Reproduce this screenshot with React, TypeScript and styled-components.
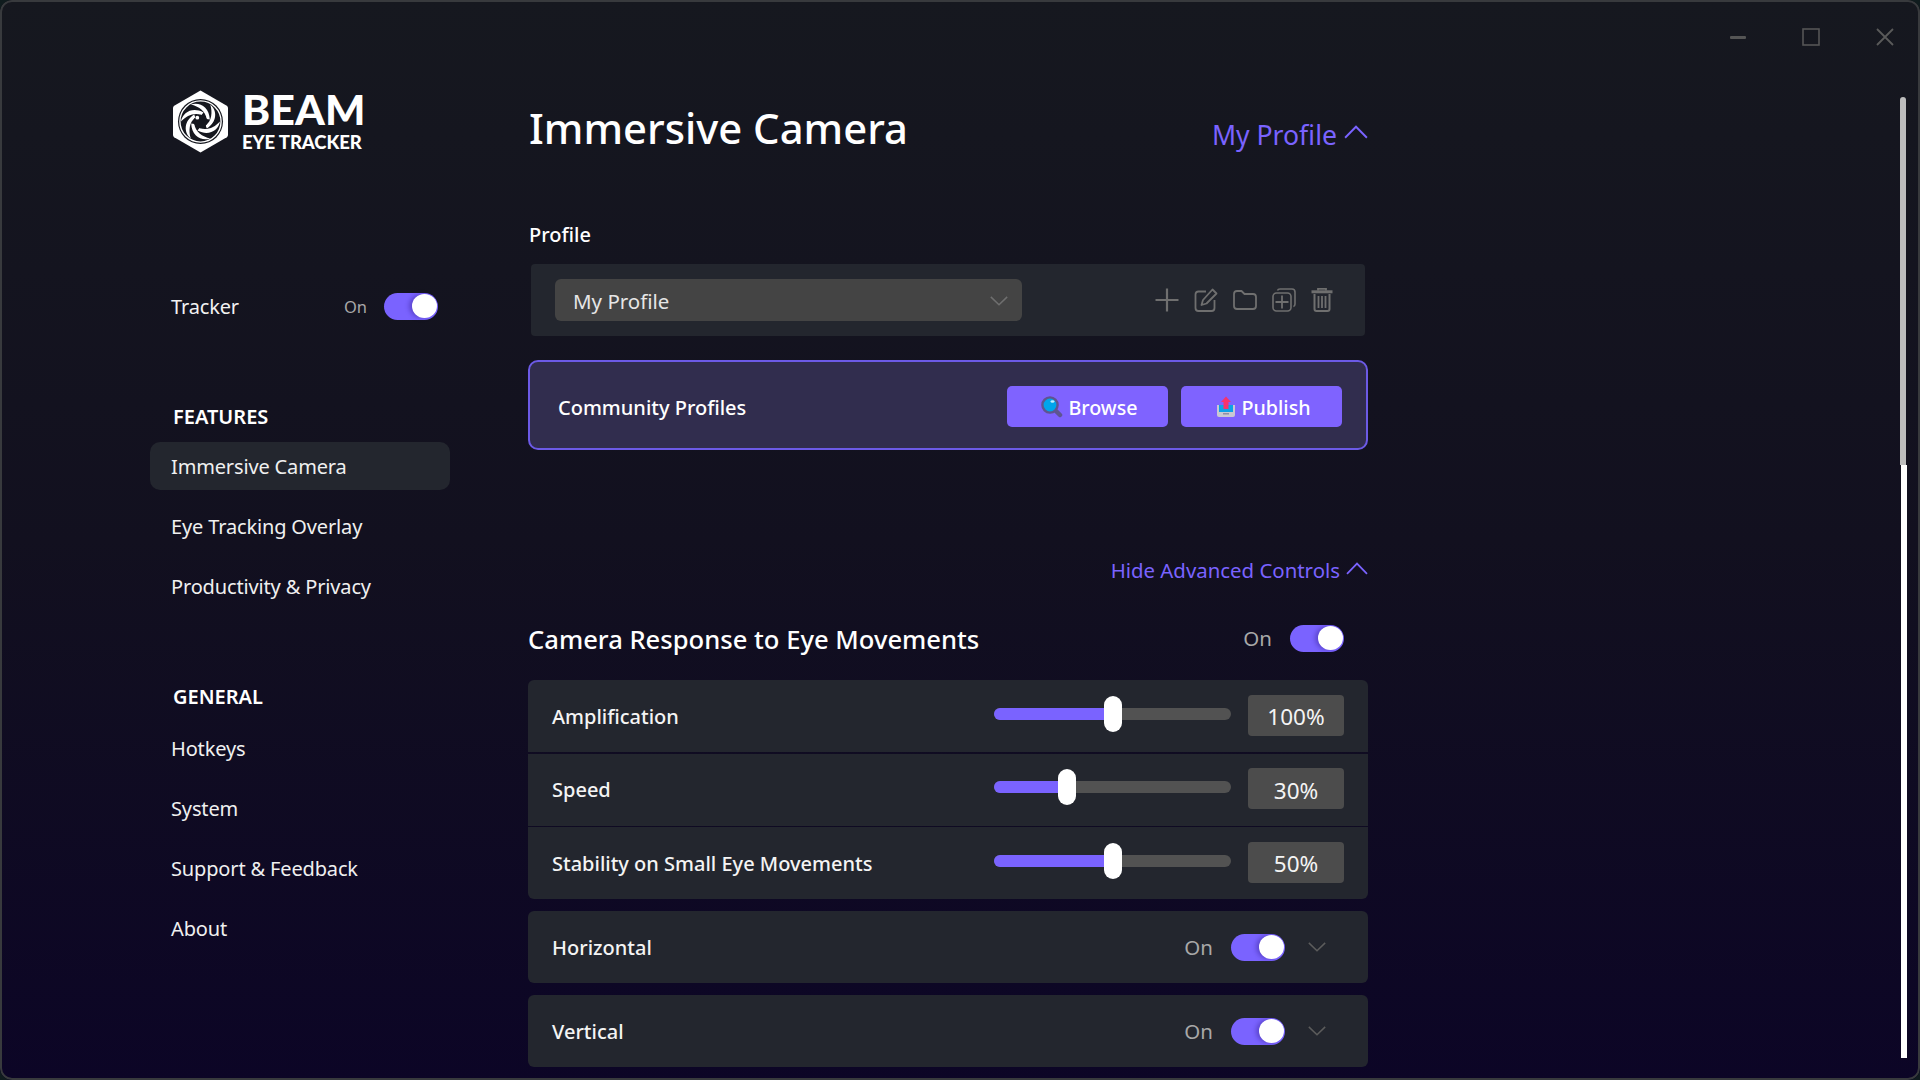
import React from "react";
import styled, { createGlobalStyle } from "styled-components";

const Global = createGlobalStyle`
  html, body { margin: 0; padding: 0; background: #101c1e; }
  * { box-sizing: border-box; }
  body { font-family: "Noto Sans", "Open Sans", "Liberation Sans", sans-serif; }
`;

const accent = "#7a63ff";

const Win = styled.div`
  position: relative; width: 1920px; height: 1080px; overflow: hidden; display: flex;
  border-radius: 12px; background: linear-gradient(180deg, #16181f 0%, #12101f 50%, #0c0526 100%);
  &::after { content: ""; position: absolute; inset: 0; border-radius: 12px; border: 2px solid #383a3d; pointer-events: none; }
`;
const Controls = styled.div`
  position: absolute; top: 25px; right: 0; width: 230px; display: flex; align-items: center; height: 24px; padding-left: 40px; gap: 56px;
`;
const ScrollGray = styled.div`position: absolute; left: 1900px; top: 97px; width: 6px; height: 368px; background: #bdbdbd; border-radius: 3px 3px 0 0;`;
const ScrollWhite = styled.div`position: absolute; left: 1901px; top: 465px; width: 6px; height: 593px; background: #fff;`;

const Side = styled.aside`width: 528px; padding: 89px 0 0 150px; flex: none;`;
const LogoRow = styled.div`display: flex; gap: 14px; padding-left: 23px; height: 64px; align-items: flex-start;`;
const LogoMark = styled.div`display: flex; margin-top: 1px;`;
const LogoText = styled.div`display: flex; flex-direction: column; color: #fff; font-family: "Lato", "Noto Sans", sans-serif; font-weight: 900;`;
const Beam = styled.span`font-size: 42.5px; line-height: 40px; letter-spacing: 0.2px;`;
const EyeT = styled.span`font-size: 18.5px; line-height: 20px; margin-top: 3px; letter-spacing: -0.1px;`;
const TrackerRow = styled.div`display: flex; align-items: center; margin-top: 138px; height: 30px; width: 300px; padding: 0 12px 0 21px;`;
const NavText = styled.span`font-size: 20px; letter-spacing: -0.15px; color: #f2f2f2; flex: 1;`;
const OnText = styled.span<{ $s?: number; $m?: number }>`font-size: ${(p) => p.$s ?? 20.5}px; color: #a8a8a8; margin-right: ${(p) => p.$m ?? 18}px;`;
const Toggle = styled.div`
  width: 54px; height: 27px; border-radius: 14px; background: ${accent}; display: flex; justify-content: flex-end; align-items: center; padding-right: 1px; flex: none;
`;
const Knob = styled.div`width: 25px; height: 24px; border-radius: 50%; background: #fff; box-shadow: -3px 0 4px rgba(40, 20, 120, 0.35);`;
const Heading = styled.div<{ $t: number }>`margin-top: ${(p) => p.$t}px; height: 30px; line-height: 30px; padding-left: 23px; font-size: 20px; font-weight: 600; color: #fff;`;
const NavList = styled.nav<{ $t: number }>`display: flex; flex-direction: column; gap: 12px; width: 300px; margin-top: ${(p) => p.$t}px;`;
const NavItem = styled.div<{ $active?: boolean }>`
  height: 48px; line-height: 50px; padding-left: 21px; border-radius: 10px; font-size: 20px; letter-spacing: -0.15px; color: #f0f0f0;
  background: ${(p) => (p.$active ? "#23262e" : "transparent")};
`;

const Main = styled.main`width: 840px; padding-top: 98px; flex: none;`;
const Header = styled.div`display: flex; justify-content: space-between; height: 58px; align-items: center;`;
const Title = styled.h1`margin: 0; font-size: 41.8px; font-weight: 500; color: #fff; padding-left: 1px;`;
const ProfileLink = styled.div`display: flex; align-items: center; gap: 7px; font-size: 26.6px; color: ${accent}; margin-top: 16px;`;
const Lift = styled.span<{ $b: number }>`display: flex; margin-bottom: ${(p) => p.$b}px;`;
const SectionLabel = styled.div`margin-top: 63px; height: 30px; line-height: 32px; padding-left: 1px; font-size: 20px; font-weight: 500; color: #fff;`;
const ProfileBar = styled.div`margin: 15px 3px 0; height: 72px; background: #23262e; border-radius: 4px; display: flex; align-items: center; padding: 0 32px 0 24px;`;
const Select = styled.div`width: 467px; height: 42px; background: #444; border-radius: 6px; display: flex; align-items: center; justify-content: space-between; padding: 1px 14px 0 18px; font-size: 20.5px; color: #e6e6e6;`;
const Tools = styled.div`margin-left: auto; display: flex; align-items: center; gap: 15px;`;
const Community = styled.div`margin-top: 24px; height: 90px; border: 2px solid #6c5ae6; border-radius: 10px; background: #312d4e; display: flex; align-items: center; padding: 3px 24px 0 28px;`;
const CommunityLabel = styled.span`font-size: 20px; font-weight: 500; color: #fff; flex: 1; padding-top: 2px;`;
const Btn = styled.div`width: 161px; height: 41px; background: #7f63ff; border-radius: 5px; display: flex; align-items: center; justify-content: center; gap: 5px; margin-left: 13px; padding: 1px 0 0 4px; font-size: 19.7px; font-weight: 500; color: #fff;`;
const AdvRow = styled.div`margin-top: 105px; height: 30px; display: flex; justify-content: flex-end; align-items: center; gap: 6px; font-size: 20.4px; color: ${accent};`;
const RespRow = styled.div`margin-top: 33px; height: 40px; display: flex; align-items: center; padding-right: 24px;`;
const RespTitle = styled.h2`margin: 0; flex: 1; padding-top: 3px; font-size: 25.6px; font-weight: 500; color: #fff;`;
const Group = styled.div`margin-top: 22px; display: flex; flex-direction: column; gap: 1.5px; border-radius: 6px; overflow: hidden;`;
const Row = styled.div`height: 72px; background: #23262e; display: flex; align-items: center; padding: 0 24px;`;
const RowLabel = styled.span`flex: 1; font-size: 20px; font-weight: 500; color: #f4f4f4;`;
const Track = styled.div`position: relative; width: 237px; height: 12px; border-radius: 6px; background: #525252; margin: 0 17px 5px 0;`;
const Fill = styled.div`height: 100%; border-radius: 6px 0 0 6px; background: ${accent};`;
const Thumb = styled.div`position: absolute; top: -12px; width: 18px; height: 36px; margin-left: -9px; border-radius: 9px; background: #fff;`;
const Value = styled.div`width: 96px; height: 41px; margin-bottom: 2px; background: #4c4c4c; border-radius: 4px; display: flex; align-items: center; justify-content: center; font-size: 22.5px; color: #f4f4f4; padding-top: 3px;`;
const Card = styled(Row) <{ $t: number }>`margin-top: ${(p) => p.$t}px; border-radius: 6px;`;
const ChevBox = styled.div`width: 59px; display: flex; justify-content: center; padding-left: 5px;`;

const Chevron = ({ up, c, w = 22, h = 12, sw = 1.8 }: { up?: boolean; c: string; w?: number; h?: number; sw?: number }) => (
  <svg width={w} height={h} viewBox="0 0 22 12" fill="none" preserveAspectRatio="none">
    <path d={up ? "M1 11 L11 1.5 L21 11" : "M1 1 L11 10.5 L21 1"} stroke={c} strokeWidth={sw} />
  </svg>
);

const blades = [0, 60, 120, 180, 240, 300];
const Logo = () => (
  <svg width="55" height="63" viewBox="0 0 55 63">
    <path d="M27.5 0.5 L53.8 15.8 Q55 16.5 55 18 L55 45 Q55 46.5 53.8 47.2 L27.5 62.5 L1.2 47.2 Q0 46.5 0 45 L0 18 Q0 16.5 1.2 15.8 Z" fill="#fff" />
    <circle cx="27.5" cy="31.5" r="22.5" fill="#15171e" />
    <circle cx="27.5" cy="31.5" r="20.6" fill="none" stroke="#fff" strokeWidth="1.4" />
    <g transform="translate(27.5 31.5)">
      {blades.map((a) => (
        <path key={a} transform={`rotate(${a})`} d="M19.5 0 C18 9 8 15 -3 9 L-1 6.5 C6 9.5 14 6 19.5 0 Z" fill="#fff" />
      ))}
      <circle r="6.8" fill="#15171e" />
      <circle cx="-3.2" cy="-3.8" r="1.9" fill="#fff" />
    </g>
  </svg>
);

const ic = "#6f6f6f";
const PlusIcon = () => (
  <svg width="24" height="24" viewBox="0 0 24 24" fill="none"><path d="M12 0.5V23.5M0.5 12H23.5" stroke={ic} strokeWidth="2.2" /></svg>
);
const EditIcon = () => (
  <svg width="24" height="24" viewBox="0 0 24 24" fill="none" stroke={ic} strokeWidth="1.8" strokeLinejoin="round">
    <path d="M12 3.5H4.5Q1.5 3.5 1.5 6.5V20Q1.5 23 4.5 23H17.5Q20.5 23 20.5 20V12" />
    <path d="M18.5 1.5L22.5 5.5L12.5 15.5L7.5 17L9 12Z" />
  </svg>
);
const FolderIcon = () => (
  <svg width="24" height="20" viewBox="0 0 24 20" fill="none" stroke={ic} strokeWidth="1.8" strokeLinejoin="round">
    <path d="M1 4Q1 1 4 1H8.5L11.5 4H20Q23 4 23 7V16Q23 19 20 19H4Q1 19 1 16Z" />
  </svg>
);
const AddCopyIcon = () => (
  <svg width="24" height="24" viewBox="0 0 24 24" fill="none" stroke={ic} strokeWidth="1.6" strokeLinejoin="round">
    <rect x="1" y="5" width="18" height="18" rx="3.5" />
    <path d="M5.5 2.6Q6 1 8 1H20Q23 1 23 4V16Q23 18 21.4 18.5" />
    <path d="M10 7.5V20.5M3.5 14H16.5" strokeWidth="1.8" />
  </svg>
);
const TrashIcon = () => (
  <svg width="22" height="24" viewBox="-1 0 22 24" fill="none" stroke={ic} strokeWidth="1.8">
    <path d="M6 2.5V0.9H14V2.5" />
    <path d="M-0.5 3.8H20.5" strokeWidth="3" />
    <path d="M2.5 6V21Q2.5 23 4.5 23H15.5Q17.5 23 17.5 21V6" strokeWidth="2" />
    <path d="M6.5 8V20M10 8V20M13.5 8V20" strokeWidth="1.8" />
  </svg>
);
const Magnifier = () => (
  <svg width="22" height="22" viewBox="0 0 22 22">
    <path d="M13 13L19 19" stroke="#5e5590" strokeWidth="4.5" strokeLinecap="round" />
    <circle cx="9" cy="9" r="7.6" fill="#00a5ec" stroke="#5e5590" strokeWidth="2.4" />
    <ellipse cx="11.5" cy="5.5" rx="2" ry="1.3" fill="#bfeeff" />
  </svg>
);
const Tray = () => (
  <svg width="20" height="22" viewBox="0 0 20 22">
    <path d="M1 9H19V19Q19 21 17 21H3Q1 21 1 19Z" fill="#c9c9d2" />
    <path d="M3 9H17V16H3Z" fill="#0da2e7" />
    <path d="M7 17H13V18.5H7Z" fill="#8f8fa5" />
    <path d="M10 0.5L15 6H12.5V13H7.5V6H5Z" fill="#f5336d" />
  </svg>
);

const MinIcon = () => (<svg width="16" height="3" viewBox="0 0 16 3"><rect width="16" height="3" fill="#555" rx="1" /></svg>);
const MaxIcon = () => (<svg width="18" height="18" viewBox="0 0 18 18" fill="none"><rect x="1" y="1" width="16" height="16" stroke="#555" strokeWidth="1.6" /></svg>);
const CloseIcon = () => (<svg width="18" height="18" viewBox="0 0 18 18" fill="none"><path d="M1 1L17 17M17 1L1 17" stroke="#5a5a5a" strokeWidth="1.8" /></svg>);

const Switch = () => (<Toggle><Knob /></Toggle>);

const sliders = [
  { label: "Amplification", pos: 50, value: "100%" },
  { label: "Speed", pos: 31, value: "30%" },
  { label: "Stability on Small Eye Movements", pos: 50, value: "50%" },
];

export default function App() {
  return (
    <Win>
      <Global />
      <Controls>
        <MinIcon />
        <MaxIcon />
        <CloseIcon />
      </Controls>
      <ScrollGray />
      <ScrollWhite />
      <Side>
        <LogoRow>
          <LogoMark><Logo /></LogoMark>
          <LogoText>
            <Beam>BEAM</Beam>
            <EyeT>EYE TRACKER</EyeT>
          </LogoText>
        </LogoRow>
        <TrackerRow>
          <NavText>Tracker</NavText>
          <OnText $s={16.5} $m={17}>On</OnText>
          <Switch />
        </TrackerRow>
        <Heading $t={81}>FEATURES</Heading>
        <NavList $t={10}>
          <NavItem $active>Immersive Camera</NavItem>
          <NavItem>Eye Tracking Overlay</NavItem>
          <NavItem>Productivity &amp; Privacy</NavItem>
        </NavList>
        <Heading $t={72}>GENERAL</Heading>
        <NavList $t={12}>
          <NavItem>Hotkeys</NavItem>
          <NavItem>System</NavItem>
          <NavItem>Support &amp; Feedback</NavItem>
          <NavItem>About</NavItem>
        </NavList>
      </Side>
      <Main>
        <Header>
          <Title>Immersive Camera</Title>
          <ProfileLink>My Profile <Lift $b={6}><Chevron up c={accent} w={24} h={14} /></Lift></ProfileLink>
        </Header>
        <SectionLabel>Profile</SectionLabel>
        <ProfileBar>
          <Select>
            My Profile
            <Chevron c="#6f6f6f" w={18} h={10} />
          </Select>
          <Tools>
            <PlusIcon />
            <EditIcon />
            <FolderIcon />
            <AddCopyIcon />
            <TrashIcon />
          </Tools>
        </ProfileBar>
        <Community>
          <CommunityLabel>Community Profiles</CommunityLabel>
          <Btn><Magnifier /> Browse</Btn>
          <Btn><Tray /> Publish</Btn>
        </Community>
        <AdvRow>Hide Advanced Controls <Lift $b={3}><Chevron up c={accent} w={22} h={13} /></Lift></AdvRow>
        <RespRow>
          <RespTitle>Camera Response to Eye Movements</RespTitle>
          <OnText $s={20.5}>On</OnText>
          <Switch />
        </RespRow>
        <Group>
          {sliders.map((s) => (
            <Row key={s.label}>
              <RowLabel>{s.label}</RowLabel>
              <Track>
                <Fill style={{ width: `${s.pos}%` }} />
                <Thumb style={{ left: `${s.pos}%` }} />
              </Track>
              <Value>{s.value}</Value>
            </Row>
          ))}
        </Group>
        <Card $t={12}>
          <RowLabel>Horizontal</RowLabel>
          <OnText>On</OnText>
          <Switch />
          <ChevBox><Chevron c="#5c5c5c" w={18} h={10} /></ChevBox>
        </Card>
        <Card $t={12}>
          <RowLabel>Vertical</RowLabel>
          <OnText>On</OnText>
          <Switch />
          <ChevBox><Chevron c="#5c5c5c" w={18} h={10} /></ChevBox>
        </Card>
      </Main>
    </Win>
  );
}
